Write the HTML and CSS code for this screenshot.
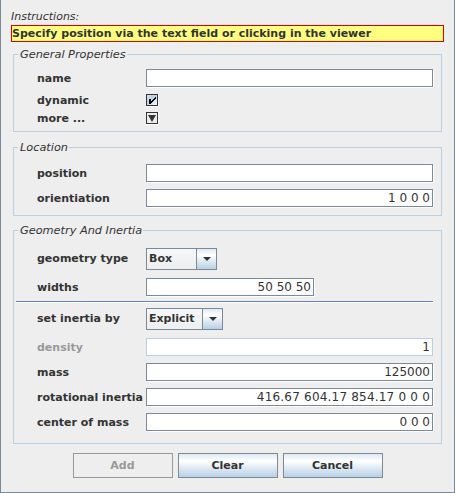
FILE: index.html
```html
<!DOCTYPE html>
<html>
<head>
<meta charset="utf-8">
<link rel="stylesheet" href="styles.css">
</head>
<body>
<div class="win">
  <div class="instr-label">Instructions:</div>
  <div class="instr">Specify position via the text field or clicking in the viewer</div>

  <fieldset class="group g-general">
    <legend>General Properties</legend>
    <div class="rows">
      <div class="row"><span class="lbl">name</span><span class="field"></span></div>
      <div class="row row-check r-dyn"><span class="lbl">dynamic</span>
        <svg class="check" width="13" height="13" viewBox="0 0 13 13" shape-rendering="crispEdges">
          <defs><linearGradient id="cg" x1="0" y1="0" x2="1" y2="1"><stop offset="0" stop-color="#dde8f3"/><stop offset="0.4" stop-color="#b8cfe5"/><stop offset="1" stop-color="#ffffff"/></linearGradient></defs>
          <rect x="0" y="0" width="13" height="13" fill="#ffffff"/>
          <rect x="0.5" y="0.5" width="11" height="11" fill="url(#cg)" stroke="#333333"/>
          <g fill="#000000">
            <rect x="3" y="5" width="2" height="5"/>
            <rect x="9" y="3" width="1" height="2"/>
            <rect x="8" y="4" width="1" height="2"/>
            <rect x="7" y="5" width="1" height="2"/>
            <rect x="6" y="6" width="1" height="2"/>
            <rect x="5" y="7" width="1" height="2"/>
          </g>
        </svg>
      </div>
      <div class="row row-check r-more"><span class="lbl">more ...</span>
        <svg class="check" width="13" height="13" viewBox="0 0 13 13" shape-rendering="crispEdges">
          <rect x="0" y="0" width="13" height="13" fill="#ffffff"/>
          <rect x="0.5" y="0.5" width="11" height="11" fill="#eeeeee" stroke="#333333"/>
          <path d="M2 3 H10 L6 10 Z" fill="#333333" shape-rendering="auto"/>
        </svg>
      </div>
    </div>
  </fieldset>

  <fieldset class="group g-loc">
    <legend>Location</legend>
    <div class="rows">
      <div class="row"><span class="lbl">position</span><span class="field"></span></div>
      <div class="row gap6"><span class="lbl">orientiation</span><span class="field">1 0 0 0</span></div>
    </div>
  </fieldset>

  <fieldset class="group g-geo">
    <legend>Geometry And Inertia</legend>
    <div class="rows">
      <div class="row row-combo"><span class="lbl">geometry type</span>
        <span class="combo c-box"><span class="combo-val">Box</span><span class="combo-btn"><svg width="8" height="4" viewBox="0 0 8 4"><path d="M0 0 H8 L4 4 Z" fill="#333"/></svg></span></span>
      </div>
      <div class="row gap8"><span class="lbl">widths</span><span class="field short">50 50 50</span></div>
      <div class="sep"></div>
      <div class="row row-combo gap5"><span class="lbl">set inertia by</span>
        <span class="combo c-exp"><span class="combo-val">Explicit</span><span class="combo-btn"><svg width="8" height="4" viewBox="0 0 8 4"><path d="M0 0 H8 L4 4 Z" fill="#333"/></svg></span></span>
      </div>
      <div class="row gap8"><span class="lbl disabled">density</span><span class="field dis">1</span></div>
      <div class="row gap6"><span class="lbl">mass</span><span class="field">125000</span></div>
      <div class="row gap6"><span class="lbl">rotational inertia</span><span class="field wide">416.67 604.17 854.17 0 0 0</span></div>
      <div class="row gap6"><span class="lbl">center of mass</span><span class="field">0 0 0</span></div>
    </div>
  </fieldset>

  <div class="buttons">
    <span class="btn disabled">Add</span>
    <span class="btn">Clear</span>
    <span class="btn">Cancel</span>
  </div>
</div>
</body>
</html>
```

FILE: styles.css
```css
body {
  margin: 0;
  background: #ffffff;
  font-family: "DejaVu Sans", sans-serif;
}

.win {
  width: 455px;
  height: 493px;
  box-sizing: border-box;
  background: #eeeeee;
  border: 1px solid #7a8a99;
  border-top: none;
  padding: 10px 10px 0 10px;
  color: #333333;
  font-size: 11px;
}

.instr-label {
  font-style: italic;
  line-height: 14px;
  margin-bottom: 1px;
}

.instr {
  height: 17px;
  box-sizing: border-box;
  background: #ffff80;
  border: 1px solid #e00000;
  padding: 1px 0 0 0;
  line-height: 14px;
  font-weight: bold;
  white-space: nowrap;
}

.group {
  margin: 6px 2px 0 2px;
  padding: 0;
  border: 1px solid #b8cfe5;
  min-width: 0;
}

.group legend {
  margin-left: 4px;
  padding: 0 1px 0 2px;
  line-height: 13px;
  font-style: italic;
  font-size: 11.3px;
  color: #333333;
}

.g-loc { margin-top: 9px; }
.g-geo { margin-top: 8px; }

.rows { padding: 8px 7px 6px 23px; }
.g-loc .rows { padding: 10px 7px 7px 23px; }
.g-geo .rows { padding: 11px 7px 11px 23px; }

.row {
  display: flex;
  align-items: center;
}

.gap5 { margin-top: 5px; }
.gap6 { margin-top: 6px; }
.gap8 { margin-top: 8px; }

.lbl {
  flex: none;
  width: 109px;
  font-weight: bold;
  line-height: 14px;
  white-space: nowrap;
}

.lbl.disabled { color: #999999; }

.row-check { height: 13px; }
.r-dyn { margin-top: 6px; }
.r-more { margin-top: 5px; }
.check { display: block; }

.field {
  flex: none;
  width: 287px;
  height: 18px;
  box-sizing: border-box;
  margin: 0 1px 1px 0;
  border: 1px solid #7a8a99;
  background: #ffffff;
  box-shadow: 1px 1px 0 #ffffff;
  padding: 1px 2px 0 0;
  font-size: 12px;
  line-height: 15px;
  text-align: right;
  white-space: nowrap;
}

.field.wide { letter-spacing: 0.2px; }

.field.short { width: 168px; }

.field.dis {
  border-color: #b8cfe5;
  box-shadow: none;
}

.combo {
  display: flex;
  height: 22px;
  box-sizing: border-box;
  border: 1px solid #7a8a99;
  background: #eeeeee;
}

.c-box { width: 71px; }
.c-exp { width: 77px; }

.combo-val {
  flex: 1;
  font-weight: bold;
  line-height: 18px;
  padding: 1px 0 0 2px;
  border-right: 1px solid #7a8a99;
  background: linear-gradient(#f4f7fa, #eeeeee);
}

.combo-btn {
  flex: none;
  width: 19px;
  display: flex;
  align-items: center;
  justify-content: center;
  background: linear-gradient(#dde8f3 0%, #ffffff 30%, #b8cfe5 100%);
}

.sep {
  height: 1px;
  margin: 4px 1px 0 -21px;
  border-top: 1px solid #6382bf;
  background: #ffffff;
}

.buttons {
  display: flex;
  justify-content: center;
  gap: 5px;
  margin-top: 9px;
}

.btn {
  width: 100px;
  height: 25px;
  box-sizing: border-box;
  border: 1px solid #7a8a99;
  background: linear-gradient(#dde8f3 0%, #ffffff 30%, #b8cfe5 100%);
  font-weight: bold;
  text-align: center;
  line-height: 23px;
}

.btn.disabled {
  border-color: #999999;
  background: #eeeeee;
  color: #999999;
}
```
